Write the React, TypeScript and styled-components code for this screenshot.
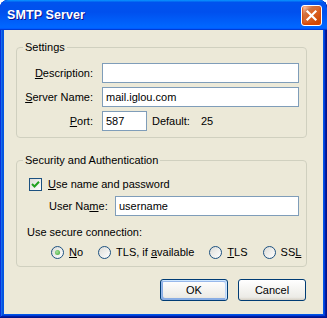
import React from "react";
import styled, { createGlobalStyle } from "styled-components";

const GlobalStyle = createGlobalStyle`
  html, body {
    margin: 0;
    padding: 0;
    background: #ffffff;
  }
  body {
    font-family: "Liberation Sans", Arial, sans-serif;
    font-size: 11px;
    color: #000;
  }
`;

const Window = styled.div`
  width: 327px;
  height: 318px;
  box-sizing: border-box;
  display: flex;
  flex-direction: column;
  background: #0055e5;
  border-radius: 8px 8px 0 0;
  overflow: hidden;
  box-shadow: inset -1px -1px #00138c, inset 1px 1px #0831d9,
    inset -2px -2px #001ea0, inset 2px 2px #166aee, inset -3px -3px #003bda,
    inset 3px 3px #0855dd;
`;

const TitleBar = styled.div`
  height: 30px;
  flex: none;
  display: flex;
  align-items: center;
  justify-content: space-between;
  padding: 0 5px 0 7px;
  border-radius: 8px 8px 0 0;
  background: linear-gradient(
    180deg,
    #0997ff,
    #0053ee 8%,
    #0050ee 40%,
    #0066ff 88%,
    #0066ff 93%,
    #005bff 95%,
    #003dd7 96%,
    #003dd7
  );
`;

const Title = styled.span`
  font-weight: bold;
  font-size: 12.5px;
  color: #fff;
  text-shadow: 1px 1px #0f1089;
  letter-spacing: 0.1px;
`;

const CloseButton = styled.button`
  width: 21px;
  height: 21px;
  padding: 0;
  display: flex;
  align-items: center;
  justify-content: center;
  border: 1px solid #fff;
  border-radius: 3px;
  background: radial-gradient(
    circle at 90% 90%,
    #cc4600 0%,
    #dc6527 55%,
    #cd7546 70%,
    #ffccb2 90%,
    #fff 100%
  );
  box-shadow: inset 0 -1px 2px 1px #da4600;
`;

const Body = styled.div`
  flex: 1;
  margin: 0 4px 4px;
  background: #ece9d8;
  padding: 11px 16px 0 12px;
  display: flex;
  flex-direction: column;
`;

const Group = styled.fieldset<{ $top?: number }>`
  margin: ${({ $top }) => $top ?? 0}px 0 0;
  padding: 9px 7px 6px 8px;
  border: 1px solid #d0d0bf;
  border-radius: 4px;
  min-width: 0;
`;

const Legend = styled.legend`
  padding: 0 2px;
  margin-left: -2px;
  line-height: 13px;
`;

const FormGrid = styled.div`
  display: grid;
  grid-template-columns: 68px 1fr;
  column-gap: 9px;
  row-gap: 4px;
  align-items: center;
`;

const Label = styled.label<{ $width?: number }>`
  text-align: right;
  white-space: nowrap;
  ${({ $width }) => ($width ? `width: ${$width}px; flex: none;` : "")}
`;

const Key = styled.span`
  text-decoration: underline;
`;

const TextBox = styled.input<{ $width?: number }>`
  box-sizing: border-box;
  height: 20px;
  width: ${({ $width }) => ($width ? `${$width}px` : "100%")};
  border: 1px solid #7f9db9;
  background: #fff;
  padding: 0 3px;
  font-family: "Liberation Sans", Arial, sans-serif;
  font-size: 11px;
  color: #000;
  outline: none;
`;

const PortRow = styled.div`
  display: flex;
  align-items: center;
`;

const Note = styled.span<{ $left: number }>`
  margin-left: ${({ $left }) => $left}px;
`;

const CheckRow = styled.label`
  display: flex;
  align-items: center;
  gap: 6px;
  height: 16px;
  margin-left: 4px;
`;

const CheckBox = styled.span`
  width: 13px;
  height: 13px;
  box-sizing: border-box;
  border: 1px solid #1c5180;
  background: linear-gradient(135deg, #dcdcd7, #ffffff);
  display: flex;
  align-items: center;
  justify-content: center;
`;

const UserRow = styled.div`
  display: flex;
  align-items: center;
  gap: 11px;
  margin: 4px 0 0 24px;
`;

const Caption = styled.div`
  margin: 9px 0 0 2px;
  height: 14px;
  line-height: 14px;
`;

const RadioRow = styled.div`
  display: flex;
  align-items: center;
  gap: 15px;
  height: 16px;
  margin: 5px 0 0 26px;
  white-space: nowrap;
`;

const RadioItem = styled.label`
  display: flex;
  align-items: center;
  gap: 5px;
  flex: none;
`;

const RadioCircle = styled.span<{ $checked?: boolean }>`
  width: 13px;
  height: 13px;
  box-sizing: border-box;
  border-radius: 50%;
  border: 1px solid #1c5180;
  background: linear-gradient(135deg, #dcdcd7, #ffffff);
  display: flex;
  align-items: center;
  justify-content: center;
  &::after {
    content: "";
    display: ${({ $checked }) => ($checked ? "block" : "none")};
    width: 5px;
    height: 5px;
    border-radius: 50%;
    background: radial-gradient(circle at 40% 40%, #a6e39e, #3aa12d);
  }
`;

const ButtonRow = styled.div`
  display: flex;
  justify-content: flex-end;
  gap: 10px;
  margin: 12px 1px 0 0;
`;

const Button = styled.button<{ $default?: boolean }>`
  width: 68px;
  height: 22px;
  box-sizing: border-box;
  border: 1px solid #003c74;
  border-radius: 3px;
  background: linear-gradient(180deg, #fff, #ecebe6 86%, #d6d0c5);
  font-family: "Liberation Sans", Arial, sans-serif;
  font-size: 11px;
  color: #000;
  padding: 0;
  box-shadow: ${({ $default }) =>
    $default
      ? "inset -1px 1px #cee7ff, inset 1px 2px #98b8ea, inset -2px 2px #bcd4f6, inset 1px -1px #89ade4, inset 2px -2px #89ade4"
      : "none"};
`;

const radios = [
  { key: "N", rest: "o", pre: "", checked: true },
  { pre: "TLS, if ", key: "a", rest: "vailable" },
  { pre: "", key: "T", rest: "LS" },
  { pre: "SS", key: "L", rest: "" },
];

export default function App() {
  return (
    <>
      <GlobalStyle />
      <Window>
        <TitleBar>
          <Title>SMTP Server</Title>
          <CloseButton aria-label="Close">
            <svg width="13" height="13" viewBox="0 0 13 13">
              <path
                d="M2.5 2.5 L10.5 10.5 M10.5 2.5 L2.5 10.5"
                stroke="#fff"
                strokeWidth="2.2"
                strokeLinecap="square"
              />
            </svg>
          </CloseButton>
        </TitleBar>
        <Body>
          <Group>
            <Legend>Settings</Legend>
            <FormGrid>
              <Label>
                <Key>D</Key>escription:
              </Label>
              <TextBox defaultValue="" />
              <Label>
                <Key>S</Key>erver Name:
              </Label>
              <TextBox defaultValue="mail.iglou.com" />
              <Label>
                <Key>P</Key>ort:
              </Label>
              <PortRow>
                <TextBox $width={45} defaultValue="587" />
                <Note $left={5}>Default:</Note>
                <Note $left={11}>25</Note>
              </PortRow>
            </FormGrid>
          </Group>

          <Group $top={16}>
            <Legend>Security and Authentication</Legend>
            <CheckRow>
              <CheckBox>
                <svg width="9" height="9" viewBox="0 0 9 9">
                  <path
                    d="M1 4 L3.5 6.5 L8 1.8"
                    fill="none"
                    stroke="#21a121"
                    strokeWidth="2"
                  />
                </svg>
              </CheckBox>
              <span>
                <Key>U</Key>se name and password
              </span>
            </CheckRow>
            <UserRow>
              <Label $width={55}>
                User Na<Key>m</Key>e:
              </Label>
              <TextBox $width={184} defaultValue="username" />
            </UserRow>
            <Caption>Use secure connection:</Caption>
            <RadioRow>
              {radios.map((r) => (
                <RadioItem key={r.pre + r.key + r.rest}>
                  <RadioCircle $checked={r.checked} />
                  <span>
                    {r.pre}
                    <Key>{r.key}</Key>
                    {r.rest}
                  </span>
                </RadioItem>
              ))}
            </RadioRow>
          </Group>

          <ButtonRow>
            <Button $default>OK</Button>
            <Button>Cancel</Button>
          </ButtonRow>
        </Body>
      </Window>
    </>
  );
}
